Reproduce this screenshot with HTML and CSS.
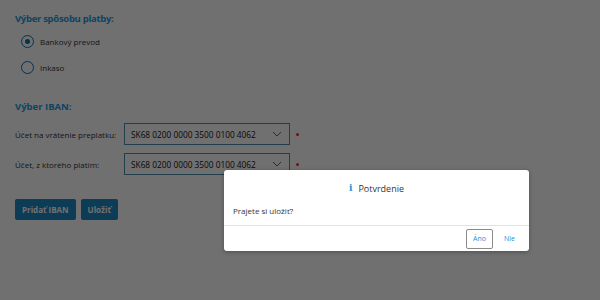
FILE: index.html
```html
<!DOCTYPE html>
<html lang="sk">
<head>
<meta charset="utf-8">
<link rel="stylesheet" href="styles.css">
</head>
<body>
<div class="page">
  <h2 class="section-title">Výber spôsobu platby:</h2>
  <div class="radios">
    <label class="radio"><span class="radio-dot checked"></span><span>Bankový prevod</span></label>
    <label class="radio"><span class="radio-dot"></span><span>Inkaso</span></label>
  </div>
  <h2 class="section-title iban-title">Výber IBAN:</h2>
  <div class="rows">
    <div class="row">
      <span class="row-label">Účet na vrátenie preplatku:</span>
      <div class="select"><span>SK68 0200 0000 3500 0100 4062</span>
        <svg class="chev" width="10" height="6" viewBox="0 0 10 6"><path d="M1 1 L5 5 L9 1" fill="none" stroke="#5a6a70" stroke-width="1"/></svg>
      </div>
      <span class="req"></span>
    </div>
    <div class="row">
      <span class="row-label">Účet, z ktorého platím:</span>
      <div class="select"><span>SK68 0200 0000 3500 0100 4062</span>
        <svg class="chev" width="10" height="6" viewBox="0 0 10 6"><path d="M1 1 L5 5 L9 1" fill="none" stroke="#5a6a70" stroke-width="1"/></svg>
      </div>
      <span class="req"></span>
    </div>
  </div>
  <div class="actions">
    <button class="btn">Pridať IBAN</button>
    <button class="btn">Uložiť</button>
  </div>
</div>
<div class="overlay"></div>
<div class="dialog">
  <div class="dialog-title"><span class="info">i</span>Potvrdenie</div>
  <div class="dialog-body">Prajete si uložiť?</div>
  <div class="dialog-footer">
    <button class="dbtn primary">Áno</button>
    <button class="dbtn">Nie</button>
  </div>
</div>
</body>
</html>
```
FILE: styles.css
```css
html, body { margin: 0; padding: 0; }
body {
  width: 600px; height: 300px; overflow: hidden;
  background: #ffffff;
  font-family: "Open Sans", "Liberation Sans", sans-serif;
  color: #222;
  position: relative;
}
.page { padding: 13px 15px 0 15px; }
.section-title {
  margin: 0;
  font-size: 9.5px;
  font-weight: 700;
  color: #1e9ae0;
  line-height: 12px;
  letter-spacing: -0.3px;
}
.radios { display: flex; flex-direction: column; gap: 12px; margin-top: 9px; padding-left: 6px; }
.radio { display: flex; align-items: center; gap: 6px; font-size: 8px; color: #333; height: 14px; }
.radio-dot {
  width: 11px; height: 11px; border: 1.5px solid #1a6fa8; border-radius: 50%;
  display: flex; align-items: center; justify-content: center; background: #fff;
}
.radio-dot.checked::after { content: ""; width: 5px; height: 5px; border-radius: 50%; background: #1a6fa8; }
.iban-title { margin-top: 27px; letter-spacing: 0; }
.rows { display: flex; flex-direction: column; gap: 8px; margin-top: 10px; }
.row { display: flex; align-items: center; height: 22px; }
.row-label { width: 109px; font-size: 8px; color: #333; }
.select {
  box-sizing: border-box; width: 166px; height: 22px;
  border: 1px solid #4f8fb0; background: #fff;
  display: flex; align-items: center; justify-content: space-between;
  padding: 0 7px 0 6px; font-size: 8.3px; color: #111;
}
.req { width: 3px; height: 3px; border-radius: 50%; background: #ff2a2a; margin-left: 6px; }
.actions { display: flex; gap: 5px; margin-top: 24px; }
.btn {
  border: none; border-radius: 2px; background: #1f88c4; color: #fff;
  font-family: inherit; font-weight: 700; font-size: 8px; height: 21px; padding: 0 7px;
}
.overlay { position: absolute; inset: 0; background: rgba(0,0,0,0.56); }
.dialog {
  position: absolute; left: 224px; top: 170px; width: 305px; height: 81px;
  background: #fff; border-radius: 3px; box-shadow: 0 1px 4px rgba(0,0,0,0.3);
  display: flex; flex-direction: column; font-family: "Open Sans", "Liberation Sans", sans-serif;
}
.dialog-title { display: flex; justify-content: center; align-items: center; gap: 6px; height: 33px; padding-top: 3px; box-sizing: border-box; font-size: 9px; color: #333; }
.info { color: #2a8fd0; font-weight: 700; font-family: "DejaVu Serif", serif; font-size: 9px; }
.dialog-body { font-size: 8px; color: #333; padding: 2px 9px 0; height: 20px; }
.dialog-footer { border-top: 1px solid #e2e2e2; display: flex; justify-content: flex-end; align-items: center; gap: 5px; padding: 0 8px 0 0; flex: 1; }
.dbtn { background: #fff; border: none; font-family: inherit; font-size: 7px; color: #2a8fd0; height: 20px; padding: 0 6px; border-radius: 2px; }
.dbtn.primary { border: 1px solid #8a8a8a; }
```
